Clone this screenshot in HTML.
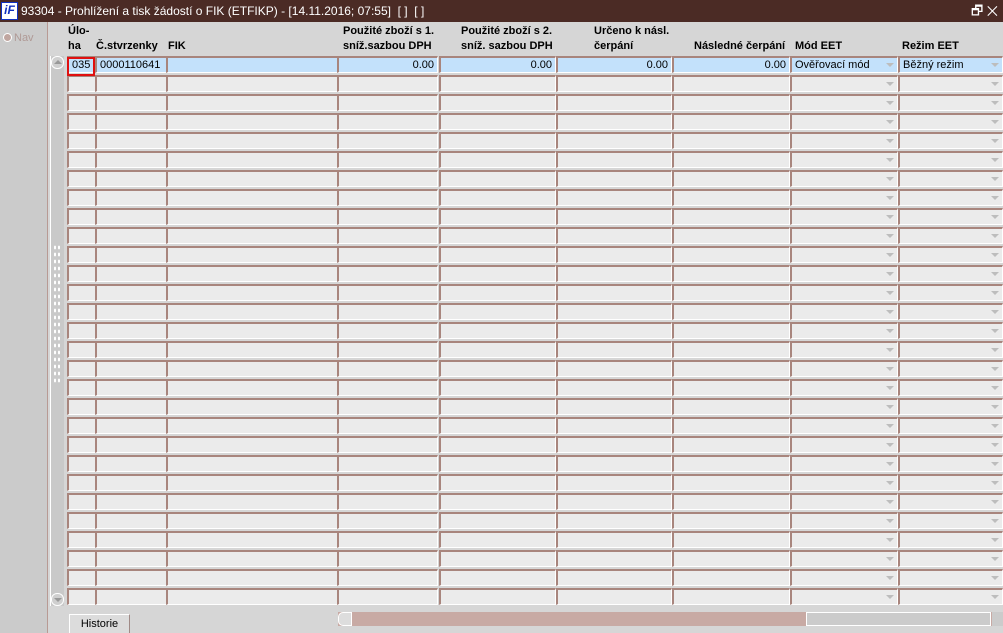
<!DOCTYPE html>
<html><head><meta charset="utf-8"><style>
*{margin:0;padding:0;box-sizing:border-box}
body{width:1003px;height:633px;overflow:hidden;background:#d6d6d6;font-family:"Liberation Sans",Arial,sans-serif;font-size:11px;position:relative;color:#000}
.title{position:absolute;left:0;top:0;width:1003px;height:22px;background:#4b2b25;color:#fff;font-size:12px;line-height:22px}
.logo{position:absolute;left:1px;top:2px;width:17px;height:18px;background:#fff;border:1px solid #1030c0;color:#1030c0;font-weight:bold;font-style:italic;font-size:12px;line-height:15px;text-align:center}
.left{position:absolute;left:0;top:22px;width:48px;height:611px;background:#cbcbcb;border-right:1px solid #b89a94}
.nav{position:absolute;left:3px;top:10px;color:#b09a96;font-size:11px}
.nav i{display:inline-block;width:9px;height:9px;border-radius:50%;background:#c0a6a0;border:1px solid #fff;vertical-align:-1px;margin-right:2px}
.h{position:absolute;font-weight:bold;font-size:11px;line-height:15px}
.c{position:absolute;height:17px;background:#ebebeb;border-top:2px solid #a8857d;border-left:2px solid #a8857d;border-right:1px solid #fff;border-bottom:1px solid #fff;line-height:14px;padding:0 3px;white-space:nowrap;overflow:hidden}
.b{background:#c3e1fb}
.r{text-align:right}
.dd::after{content:"";position:absolute;right:3px;top:5px;border-left:4px solid transparent;border-right:4px solid transparent;border-top:4px solid #bdbdbd}
.vs{position:absolute;left:50px;top:56px;width:14px;height:550px;background:#c9c9c9;border-left:1px solid #fff}
.hs{position:absolute;left:338px;top:612px;width:665px;height:14px;background:#c8aaa4}
.btn{position:absolute;left:69px;top:614px;width:61px;height:19px;background:#dcdcdc;border:1px solid #fff;border-right-color:#a08a86;border-bottom:none;text-align:center;line-height:18px;font-size:11px;color:#000}
</style></head><body>
<div class="title"><div class="logo">iF</div><span style="position:absolute;left:21px">93304 - Prohlížení a tisk žádostí o FIK (ETFIKP) - [14.11.2016; 07:55]&nbsp; [ ]&nbsp; [ ]</span><span style="position:absolute;right:5px;top:0;font-size:13px">🗗 ✕</span></div>
<div class="left"><div class="nav"><i></i>Nav</div></div>
<div class="h" style="left:68px;top:24px">Úlo-<br>ha</div>
<div class="h" style="left:96px;top:39px">Č.stvrzenky</div>
<div class="h" style="left:168px;top:39px">FIK</div>
<div class="h" style="left:343px;top:24px">Použité zboží s 1.<br>sníž.sazbou DPH</div>
<div class="h" style="left:461px;top:24px">Použité zboží s 2.<br>sníž. sazbou DPH</div>
<div class="h" style="left:594px;top:24px">Určeno k násl.<br>čerpání</div>
<div class="h" style="left:694px;top:39px">Následné čerpání</div>
<div class="h" style="left:795px;top:39px">Mód EET</div>
<div class="h" style="left:902px;top:39px">Režim EET</div>
<div class="vs">
<div style="position:absolute;left:0;top:0;width:13px;height:13px;border:1px solid #fff;border-radius:6px;background:#cfcfcf"><div style="position:absolute;left:2px;top:3px;border-left:4px solid transparent;border-right:4px solid transparent;border-bottom:4px solid #999"></div></div>
<div style="position:absolute;left:2px;top:188px;width:8px;height:140px;background-image:radial-gradient(#fff 1px,transparent 1.2px);background-size:4px 7px"></div>
<div style="position:absolute;left:0;bottom:0;width:13px;height:13px;border:1px solid #fff;border-radius:6px;background:#cfcfcf"><div style="position:absolute;left:2px;top:4px;border-left:4px solid transparent;border-right:4px solid transparent;border-top:4px solid #999"></div></div>
</div>
<div id="g"></div>
<div class="hs"><div style="position:absolute;left:0;top:0;width:14px;height:14px;background:#ddd;border:1px solid #fff;border-radius:5px 0 0 5px"></div><div style="position:absolute;left:468px;top:0;width:185px;height:14px;background:#cbcbcb;border:1px solid #fff"></div><div style="position:absolute;left:654px;top:0;width:11px;height:14px;background:#cbcbcb"></div></div>
<div class="btn">Historie</div>
<script>
var cols=[[67,29],[95,72],[166,172],[337,101],[439,117],[556,116],[672,118],[790,108],[898,105]];
var h="";
for(var r=0;r<29;r++){var y=56+r*19;for(var c=0;c<9;c++){var cl="c"+(r==0?" b":"")+(c>=3&&c<=6?" r":"")+(c>=7?" dd":"");var t="";if(r==0){t=["035","0000110641","","0.00","0.00","0.00","0.00","Ověřovací mód","Běžný režim"][c];}
h+='<div class="'+cl+'" style="left:'+cols[c][0]+'px;top:'+y+'px;width:'+cols[c][1]+'px">'+t+'</div>';}}
h+='<div style="position:absolute;left:67px;top:57px;width:28px;height:19px;border:2px solid #e01010"></div>';
document.getElementById("g").innerHTML=h;
</script>
</body></html>
